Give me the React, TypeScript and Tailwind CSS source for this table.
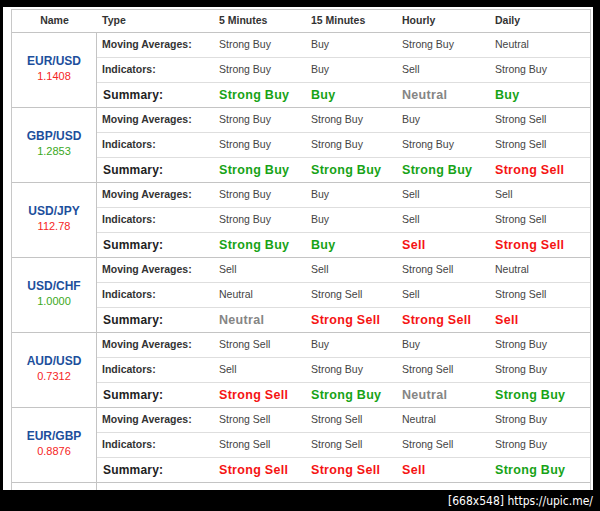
type Signal = "Strong Buy" | "Buy" | "Neutral" | "Sell" | "Strong Sell";

type Pair = {
  name: string;
  price: string;
  up: boolean;
  ma: Signal[];
  ind: Signal[];
  sum: Signal[];
};

const pairs: Pair[] = [
  {
    name: "EUR/USD",
    price: "1.1408",
    up: false,
    ma: ["Strong Buy", "Buy", "Strong Buy", "Neutral"],
    ind: ["Strong Buy", "Buy", "Sell", "Strong Buy"],
    sum: ["Strong Buy", "Buy", "Neutral", "Buy"],
  },
  {
    name: "GBP/USD",
    price: "1.2853",
    up: true,
    ma: ["Strong Buy", "Strong Buy", "Buy", "Strong Sell"],
    ind: ["Strong Buy", "Strong Buy", "Strong Buy", "Strong Sell"],
    sum: ["Strong Buy", "Strong Buy", "Strong Buy", "Strong Sell"],
  },
  {
    name: "USD/JPY",
    price: "112.78",
    up: false,
    ma: ["Strong Buy", "Buy", "Sell", "Sell"],
    ind: ["Strong Buy", "Buy", "Sell", "Strong Sell"],
    sum: ["Strong Buy", "Buy", "Sell", "Strong Sell"],
  },
  {
    name: "USD/CHF",
    price: "1.0000",
    up: true,
    ma: ["Sell", "Sell", "Strong Sell", "Neutral"],
    ind: ["Neutral", "Strong Sell", "Sell", "Strong Sell"],
    sum: ["Neutral", "Strong Sell", "Strong Sell", "Sell"],
  },
  {
    name: "AUD/USD",
    price: "0.7312",
    up: false,
    ma: ["Strong Sell", "Buy", "Buy", "Strong Buy"],
    ind: ["Sell", "Strong Buy", "Strong Sell", "Strong Buy"],
    sum: ["Strong Sell", "Strong Buy", "Neutral", "Strong Buy"],
  },
  {
    name: "EUR/GBP",
    price: "0.8876",
    up: false,
    ma: ["Strong Sell", "Strong Sell", "Neutral", "Strong Buy"],
    ind: ["Strong Sell", "Strong Sell", "Strong Sell", "Strong Buy"],
    sum: ["Strong Sell", "Strong Sell", "Sell", "Strong Buy"],
  },
  {
    name: "USD/CAD",
    price: "1.3120",
    up: true,
    ma: ["Buy", "Strong Buy", "Neutral", "Buy"],
    ind: ["Buy", "Strong Buy", "Neutral", "Buy"],
    sum: ["Buy", "Strong Buy", "Neutral", "Buy"],
  },
];

const cols = "grid grid-cols-[117px_92px_91px_93px_100px]";

function sumColor(s: Signal): string {
  if (s === "Neutral") return "text-[#858585]";
  if (s === "Buy" || s === "Strong Buy") return "text-[#17a317]";
  return "text-[#f51414]";
}

function PairGroup({ pair }: { pair: Pair }) {
  return (
    <div className="flex border-b border-[#c4c4c4]">
      <div className="flex w-[85px] shrink-0 flex-col items-center justify-center border-r border-[#c4c4c4] pb-[3px]">
        <div className="text-[12px] font-bold leading-[15px] text-[#1d4f9c]">{pair.name}</div>
        <div
          className={`text-[11px] leading-[15px] ${pair.up ? "text-[#3aa81c]" : "text-[#f52525]"}`}
        >
          {pair.price}
        </div>
      </div>
      <div className="flex flex-col">
        <div className={`${cols} h-[25px] items-center border-b border-[#dedede] text-[10.5px] text-[#444]`}>
          <div className="pl-[5px] font-bold text-[#333]">Moving Averages:</div>
          {pair.ma.map((s, i) => (
            <div key={i} className="pl-[5px]">
              {s}
            </div>
          ))}
        </div>
        <div className={`${cols} h-[25px] items-center border-b border-[#dedede] text-[10.5px] text-[#444]`}>
          <div className="pl-[5px] font-bold text-[#333]">Indicators:</div>
          {pair.ind.map((s, i) => (
            <div key={i} className="pl-[5px]">
              {s}
            </div>
          ))}
        </div>
        <div className={`${cols} h-[24px] items-center`}>
          <div className="pl-[6px] text-[12px] font-bold tracking-[0.2px] text-[#222]">Summary:</div>
          {pair.sum.map((s, i) => (
            <div
              key={i}
              className={`pl-[5px] text-[12.5px] font-bold tracking-[0.3px] ${sumColor(s)}`}
            >
              {s}
            </div>
          ))}
        </div>
      </div>
    </div>
  );
}

export default function App() {
  return (
    <div className="flex h-[511px] w-[600px] flex-col overflow-hidden bg-black font-['Liberation_Sans',Arial,sans-serif]">
      <div className="ml-[3px] mt-[7px] h-[483px] w-[590px] shrink-0 overflow-hidden bg-white pl-[8px] pt-[2px]">
        <div className="w-[580px] border border-[#c8c8c8]">
          <div className="flex h-[23px] items-center border-b border-[#c4c4c4] text-[10.5px] font-bold text-[#333]">
            <div className="w-[85px] text-center">Name</div>
            <div className={cols}>
              <div className="pl-[5px]">Type</div>
              <div className="pl-[5px]">5 Minutes</div>
              <div className="pl-[5px]">15 Minutes</div>
              <div className="pl-[5px]">Hourly</div>
              <div className="pl-[5px]">Daily</div>
            </div>
          </div>
          {pairs.map((p) => (
            <PairGroup key={p.name} pair={p} />
          ))}
        </div>
      </div>
      <div className="flex h-[21px] items-center justify-end pr-[7px] font-['DejaVu_Sans_Condensed','DejaVu_Sans',sans-serif] text-[12px] text-white">
        [668x548] https://upic.me/
      </div>
    </div>
  );
}
